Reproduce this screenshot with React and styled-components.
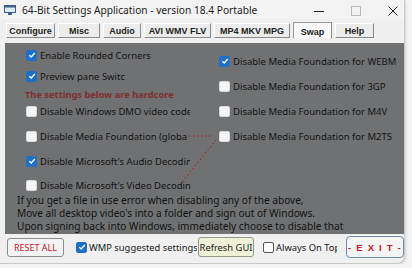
import React from 'react'
import styled, { createGlobalStyle } from 'styled-components'

const Global = createGlobalStyle`
  html, body { margin: 0; padding: 0; background: #f4f4f4; }
  body { font-family: "Noto Sans", "Open Sans", sans-serif; }
`

const leftItems = [
  { label: 'Enable Rounded Corners', checked: true, w: 150, mt: 0 },
  { label: 'Preview pane Switch', checked: true, w: 85, mt: 1 },
  { note: 'The settings below are hardcore', mt: 1 },
  { label: 'Disable Windows DMO video codecs', checked: false, w: 150, mt: 0 },
  { label: 'Disable Media Foundation (global)', checked: false, w: 147, mt: 5 },
  { label: "Disable Microsoft's Audio Decoding", checked: true, w: 150, mt: 5 },
  { label: "Disable Microsoft's Video Decoding", checked: false, w: 151, mt: 4 },
]

const rightItems = [
  { label: 'Disable Media Foundation for WEBM', checked: true },
  { label: 'Disable Media Foundation for 3GP', checked: false },
  { label: 'Disable Media Foundation for M4V', checked: false },
  { label: 'Disable Media Foundation for M2TS', checked: false },
]

const tabs = [
  { name: 'Configure', w: 49 },
  { name: 'Misc', w: 42 },
  { name: 'Audio', w: 38 },
  { name: 'AVI WMV FLV', w: 67 },
  { name: 'MP4 MKV MPG', w: 76 },
  { name: 'Swap', w: 39, active: true },
  { name: 'Help', w: 39 },
]

function Check({ checked, light }) {
  return (
    <Box $checked={checked} $light={light}>
      {checked && (
        <svg width="8" height="8" viewBox="0 0 8 8">
          <path d="M1.3 4.2 L3.2 6 L6.8 2" fill="none" stroke="#fff" strokeWidth="1.3" />
        </svg>
      )}
    </Box>
  )
}

export default function App() {
  return (
    <>
      <Global />
      <Window>
        <TitleBar>
          <svg width="12" height="10" viewBox="0 0 12 10">
            <rect x="0.5" y="0.5" width="11" height="7" fill="#dfe9f3" stroke="#3d5f86" />
            <rect x="0.5" y="0.5" width="11" height="2" fill="#3d5f86" />
            <rect x="4" y="8" width="4" height="2" fill="#3d5f86" />
          </svg>
          <Title>64-Bit Settings Application - version 18.4 Portable</Title>
          <Controls>
            <svg width="12" height="12" viewBox="0 0 12 12">
              <path d="M1 6.5 H11" stroke="#222" strokeWidth="1" />
            </svg>
            <svg width="12" height="12" viewBox="0 0 12 12">
              <rect x="1.5" y="1.5" width="9" height="9" fill="none" stroke="#bbb" strokeWidth="1" />
            </svg>
            <svg width="12" height="12" viewBox="0 0 12 12">
              <path d="M1.5 1.5 L10.5 10.5 M10.5 1.5 L1.5 10.5" stroke="#222" strokeWidth="1" />
            </svg>
          </Controls>
        </TitleBar>

        <TabRow>
          {tabs.map(t => (
            <Tab key={t.name} $w={t.w} $active={t.active}>{t.name}</Tab>
          ))}
        </TabRow>

        <Panel>
          <Columns>
            <LeftCol>
              {leftItems.map((it, i) =>
                it.note ? (
                  <Note key={i} $mt={it.mt}>{it.note}</Note>
                ) : (
                  <Row key={i} $mt={it.mt}>
                    <Check checked={it.checked} />
                    <Label $w={it.w}>{it.label}</Label>
                  </Row>
                )
              )}
            </LeftCol>
            <RightCol>
              {rightItems.map((it, i) => (
                <Row key={i} $mt={i === 0 ? 0 : 5}>
                  <Check checked={it.checked} />
                  <Label>{it.label}</Label>
                </Row>
              ))}
            </RightCol>
          </Columns>
          <Info>
            <div>If you get a file in use error when disabling any of the above,</div>
            <div>Move all desktop video's into a folder and sign out of Windows.</div>
            <div>Upon signing back into Windows, immediately choose to disable that</div>
          </Info>
          <Link width="40" height="50" viewBox="0 0 40 50">
            <path d="M1 1 H25" stroke="#b02a2a" strokeWidth="1.3" strokeDasharray="1.4 2.6" fill="none" />
            <path d="M28 5 L-6 47" stroke="#b02a2a" strokeWidth="1.3" strokeDasharray="1.4 2.6" fill="none" />
          </Link>
        </Panel>

        <Footer>
          <ResetButton>RESET ALL</ResetButton>
          <Option $w={121}>
            <Check checked />
            <span>WMP suggested settings</span>
          </Option>
          <RefreshButton>Refresh GUI</RefreshButton>
          <Option $w={74} $ml={9}>
            <Check light />
            <span>Always On Top</span>
          </Option>
          <ExitButton>- E X I T -</ExitButton>
        </Footer>
      </Window>
    </>
  )
}

const Window = styled.div`
  width: 405px;
  height: 264px;
  box-sizing: border-box;
  background: #f0f0f0;
  border-right: 1px solid #c9c9c9;
  border-bottom: 1px solid #c9c9c9;
  border-radius: 0 0 8px 0;
  display: flex;
  flex-direction: column;
  overflow: hidden;
  box-shadow: 1px 1px 3px rgba(0,0,0,0.12);
`

const TitleBar = styled.div`
  height: 19px;
  display: flex;
  align-items: center;
  padding-left: 4px;
  background: #f3f3f3;
`

const Title = styled.div`
  margin-left: 6px;
  font-size: 10.2px;
  color: #1b1b1b;
  white-space: nowrap;
`

const Controls = styled.div`
  margin-left: auto;
  display: flex;
  gap: 25px;
  padding-right: 5px;
  padding-top: 2px;
`

const TabRow = styled.div`
  display: flex;
  gap: 3px;
  padding: 3px 0 0 6px;
  height: 19px;
`

const Tab = styled.div`
  width: ${p => p.$w}px;
  height: ${p => (p.$active ? 17 : 15)}px;
  margin-top: ${p => (p.$active ? 0 : 1)}px;
  box-sizing: border-box;
  display: flex;
  align-items: center;
  justify-content: center;
  font-family: "Liberation Sans", Arial, sans-serif;
  font-weight: bold;
  font-size: 9px;
  color: #222;
  background: ${p => (p.$active ? '#fafafa' : '#ececec')};
  border-top: 1px solid #fff;
  border-left: 1px solid #fff;
  border-right: 1px solid #8a8a8a;
  border-bottom: 1px solid ${p => (p.$active ? '#f0f0f0' : '#8a8a8a')};
  ${p => p.$active && 'padding-top: 2px; border-left-color: #999; border-top-color: #999;'}
`

const Panel = styled.div`
  position: relative;
  margin: 2px 0 0 5px;
  width: 399px;
  height: 191px;
  background: #707172;
  display: flex;
  flex-direction: column;
`

const Columns = styled.div`
  display: grid;
  grid-template-columns: 214px 1fr;
  height: 151px;
`

const LeftCol = styled.div`
  display: flex;
  flex-direction: column;
  padding: 2px 0 0 21px;
`

const RightCol = styled.div`
  display: flex;
  flex-direction: column;
  padding-top: 8px;
`

const Row = styled.div`
  height: 20px;
  margin-top: ${p => p.$mt}px;
  display: flex;
  align-items: center;
`

const Box = styled.span`
  flex: none;
  width: 11px;
  height: 11px;
  box-sizing: border-box;
  border-radius: 2px;
  display: inline-flex;
  align-items: center;
  justify-content: center;
  background: ${p => (p.$checked ? '#1f6fc5' : p.$light ? '#fbfbfb' : '#f5f5f5')};
  border: 1px solid ${p => (p.$checked ? '#1f6fc5' : p.$light ? '#555' : '#d8d8d8')};
`

const Label = styled.span`
  margin-left: 3px;
  font-size: 9.5px;
  color: #141414;
  white-space: nowrap;
  overflow: hidden;
  ${p => p.$w && `width: ${p.$w}px;`}
`

const Note = styled.div`
  height: 14px;
  margin-top: ${p => p.$mt}px;
  margin-left: -1px;
  display: flex;
  align-items: center;
  font-size: 9.3px;
  font-weight: bold;
  color: #7e2f2f;
  white-space: nowrap;
`

const Info = styled.div`
  padding-left: 12px;
  font-size: 10.1px;
  line-height: 13px;
  color: #111;
  white-space: nowrap;
`

const Link = styled.svg`
  position: absolute;
  left: 183px;
  top: 92px;
  overflow: visible;
`

const Footer = styled.div`
  flex: 1;
  display: flex;
  align-items: center;
  padding: 0 0 3px 7px;
`

const ResetButton = styled.div`
  width: 57px;
  height: 19px;
  box-sizing: border-box;
  display: flex;
  align-items: center;
  justify-content: center;
  border: 1px solid #8c8c8c;
  border-radius: 3px;
  background: #f3f3f3;
  color: #c2202c;
  font-size: 9px;
`

const Option = styled.div`
  width: ${p => p.$w}px;
  margin-left: ${p => p.$ml || 12}px;
  display: flex;
  align-items: center;
  gap: 2px;
  font-size: 9.4px;
  color: #1a1a1a;
  white-space: nowrap;
  overflow: hidden;
`

const RefreshButton = styled.div`
  margin-left: 1px;
  width: 56px;
  height: 20px;
  box-sizing: border-box;
  display: flex;
  align-items: center;
  justify-content: center;
  border: 1px solid #8f9a88;
  border-radius: 3px;
  background: #eef1d8;
  color: #1a1a1a;
  font-size: 9.4px;
  white-space: nowrap;
`

const ExitButton = styled.div`
  margin-left: 9px;
  width: 58px;
  height: 22px;
  box-sizing: border-box;
  display: flex;
  align-items: center;
  justify-content: center;
  border: 1px solid #6d8cab;
  border-radius: 4px;
  background: #f4f4f4;
  color: #c2202c;
  font-family: "Liberation Sans", Arial, sans-serif;
  font-weight: bold;
  font-size: 9.5px;
  letter-spacing: 1.2px;
  white-space: nowrap;
`
